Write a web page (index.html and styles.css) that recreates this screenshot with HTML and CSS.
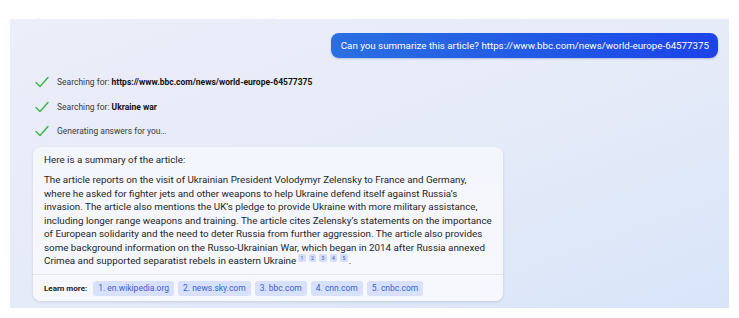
FILE: index.html
```html
<!DOCTYPE html>
<html>
<head>
<meta charset="utf-8">
<link rel="stylesheet" href="styles.css">
</head>
<body>
<div class="top">
  <div class="top-box"></div>
</div>
<div class="panel">
  <div class="user-row">
    <div class="bubble">Can you summarize this article? https://www.bbc.com/news/world-europe-64577375</div>
  </div>
  <ul class="steps">
    <li class="step"><svg class="check" viewBox="0 0 14 12"><path d="M1 6.5 L5 10.5 L13 1.5" fill="none" stroke="#3bb54a" stroke-width="1.4" stroke-linecap="round" stroke-linejoin="round"/></svg><span>Searching for: <b>https://www.bbc.com/news/world-europe-64577375</b></span></li>
    <li class="step"><svg class="check" viewBox="0 0 14 12"><path d="M1 6.5 L5 10.5 L13 1.5" fill="none" stroke="#3bb54a" stroke-width="1.4" stroke-linecap="round" stroke-linejoin="round"/></svg><span>Searching for: <b>Ukraine war</b></span></li>
    <li class="step"><svg class="check" viewBox="0 0 14 12"><path d="M1 6.5 L5 10.5 L13 1.5" fill="none" stroke="#3bb54a" stroke-width="1.4" stroke-linecap="round" stroke-linejoin="round"/></svg><span>Generating answers for you…</span></li>
  </ul>
  <div class="card">
    <div class="card-body">
      <p class="intro">Here is a summary of the article:</p>
      <p class="text">The article reports on the visit of Ukrainian President Volodymyr Zelensky to France and Germany, where he asked for fighter jets and other weapons to help Ukraine defend itself against Russia’s invasion. The article also mentions the UK’s pledge to provide Ukraine with more military assistance, including longer range weapons and training. The article cites Zelensky’s statements on the importance of European solidarity and the need to deter Russia from further aggression. The article also provides some background information on the Russo-Ukrainian War, which began in 2014 after Russia annexed Crimea and supported separatist rebels in eastern Ukraine<span class="cites"><span class="cite">1</span><span class="cite">2</span><span class="cite">3</span><span class="cite">4</span><span class="cite">5</span></span>.</p>
    </div>
    <div class="learn">
      <span class="learn-label">Learn more:</span>
      <span class="chip">1. en.wikipedia.org</span>
      <span class="chip">2. news.sky.com</span>
      <span class="chip">3. bbc.com</span>
      <span class="chip">4. cnn.com</span>
      <span class="chip">5. cnbc.com</span>
    </div>
  </div>
</div>
</body>
</html>
```

FILE: styles.css
```css
* { box-sizing: border-box; }
html, body { margin: 0; padding: 0; background: #ffffff; }
body { font-family: Roboto, "Liberation Sans", Arial, sans-serif; color: #1f1f1f; width: 739px; height: 318px; overflow: hidden; }

.top { height: 19px; padding-left: 35px; }
.top-box { width: 242px; height: 19px; background: #ffffff; border-radius: 0 0 8px 8px; box-shadow: 0 2px 2px -1px rgba(0,0,0,0.08); }

.panel {
  margin-left: 10px;
  width: 719px;
  height: 289px;
  background: linear-gradient(160deg, #eceef9 0%, #e6ebf8 50%, #d8e5f9 100%);
  padding: 14px 11px 0 23px;
  display: flex;
  flex-direction: column;
}

.user-row { display: flex; justify-content: flex-end; }
.bubble {
  height: 25px;
  padding: 0 9px 0 10px;
  display: flex;
  align-items: center;
  border-radius: 8px;
  background: linear-gradient(90deg, #2a6fe1 0%, #2057e6 60%, #1c43e9 100%);
  color: #ffffff;
  font-size: 9.75px;
  box-shadow: 0 1px 2px rgba(30,60,160,0.25);
}

.steps { list-style: none; margin: 17px 0 0 0; padding: 0 0 0 2px; display: flex; flex-direction: column; gap: 10.5px; }
.step { display: flex; align-items: center; height: 14px; font-size: 8.5px; color: #3a3a3a; }
.step b { color: #111; font-weight: 700; }
.check { width: 14px; height: 12px; margin-right: 8px; flex: none; }

.card {
  margin-top: 9px;
  width: 470px;
  background: linear-gradient(180deg, #f4f6fd 0%, #f7f8fd 100%);
  border-radius: 8px;
  box-shadow: 0 1px 3px rgba(0,0,0,0.12);
}
.card-body { padding: 6px 11px 6px 11px; }
.intro { margin: 0 0 6px 0; font-size: 9.8px; line-height: 14px; color: #1f1f1f; }
.text { margin: 0; font-size: 9.8px; line-height: 13.5px; color: #1f1f1f; }
.cites { display: inline-block; margin-left: 2px; vertical-align: 4px; font-size: 5px; line-height: 8px; }
.cite { display: inline-block; width: 7.5px; height: 8px; margin-right: 3px; text-align: center; background: #d3dcf8; color: #3d58c0; font-size: 5px; line-height: 8px; border-radius: 2px; vertical-align: top; }
.cite:last-child { margin-right: 1px; }

.learn {
  border-top: 1px solid #e3e6ef;
  padding: 6px 11px 5px 11px;
  display: flex;
  align-items: center;
  gap: 4px;
}
.learn-label { font-size: 8px; font-weight: 700; color: #222; margin-right: 2px; }
.chip {
  height: 15px;
  padding: 0 5px;
  display: inline-flex;
  align-items: center;
  background: #d8e1fb;
  color: #3e5dcc;
  font-size: 8.5px;
  border-radius: 3px;
}
```
